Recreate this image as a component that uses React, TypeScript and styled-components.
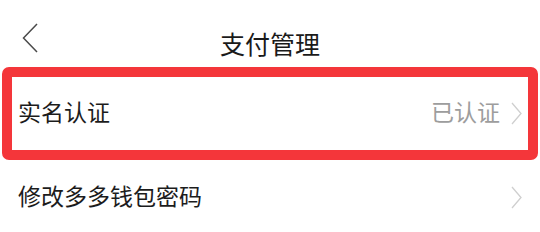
import React from "react";
import styled, { createGlobalStyle } from "styled-components";

const GlobalStyle = createGlobalStyle`
  html, body {
    margin: 0;
    padding: 0;
    background: #ffffff;
  }
  body {
    font-family: "Noto Sans CJK SC", "Noto Sans", sans-serif;
    color: #1c1c1c;
  }
`;

type Item = {
  label: string;
  status?: string;
  highlighted?: boolean;
};

const items: Item[] = [
  { label: "实名认证", status: "已认证", highlighted: true },
  { label: "修改多多钱包密码" },
];

const App = () => {
  return (
    <>
      <GlobalStyle />
      <Page>
        <Header>
          <BackButton aria-label="返回">
            <svg width="16" height="30" viewBox="0 0 16 30" fill="none">
              <path d="M15 1 L1.5 15 L15 29" stroke="#4a4a4a" strokeWidth="1.5" />
            </svg>
          </BackButton>
          <Title>支付管理</Title>
          <span />
        </Header>
        {items.map((item) =>
          item.highlighted ? (
            <Highlight key={item.label}>
              <SettingRow item={item} inset />
            </Highlight>
          ) : (
            <SettingRow key={item.label} item={item} />
          )
        )}
      </Page>
    </>
  );
};

const SettingRow = ({ item, inset }: { item: Item; inset?: boolean }) => (
  <Row $inset={inset}>
    <Label>{item.label}</Label>
    <Right>
      {item.status && <Status>{item.status}</Status>}
      <Chevron width="11" height="23" viewBox="0 0 11 23" fill="none">
        <path d="M1 1 L10 11.5 L1 22" stroke="#cfcfcf" strokeWidth="1.3" />
      </Chevron>
    </Right>
  </Row>
);

const Page = styled.div`
  width: 540px;
  display: flex;
  flex-direction: column;
`;

const Header = styled.div`
  display: grid;
  grid-template-columns: 60px 1fr 60px;
  height: 67px;
`;

const BackButton = styled.div`
  display: flex;
  align-self: start;
  margin: 23px 0 0 22px;
`;

const Title = styled.h1`
  margin: 31px 0 0;
  font-size: 25px;
  line-height: 25px;
  font-weight: 400;
  text-align: center;
  color: #1a1a1a;
`;

const Highlight = styled.div`
  margin: 0 2px;
  border: 10px solid #f4363a;
  border-radius: 7px;
`;

const Row = styled.div<{ $inset?: boolean }>`
  display: flex;
  align-items: center;
  justify-content: space-between;
  height: ${(p) => (p.$inset ? "73px" : "74px")};
  padding: 0 ${(p) => (p.$inset ? "6px" : "18px")} 4px;
  box-sizing: border-box;
  background: #ffffff;
`;

const Label = styled.span`
  font-size: 23px;
  line-height: 23px;
  color: #1c1c1c;
`;

const Right = styled.div`
  display: flex;
  align-items: center;
  gap: 11px;
`;

const Chevron = styled.svg`
  margin-top: 4px;
`;

const Status = styled.span`
  font-size: 23px;
  line-height: 23px;
  color: #9d9d9d;
`;

export default App;
